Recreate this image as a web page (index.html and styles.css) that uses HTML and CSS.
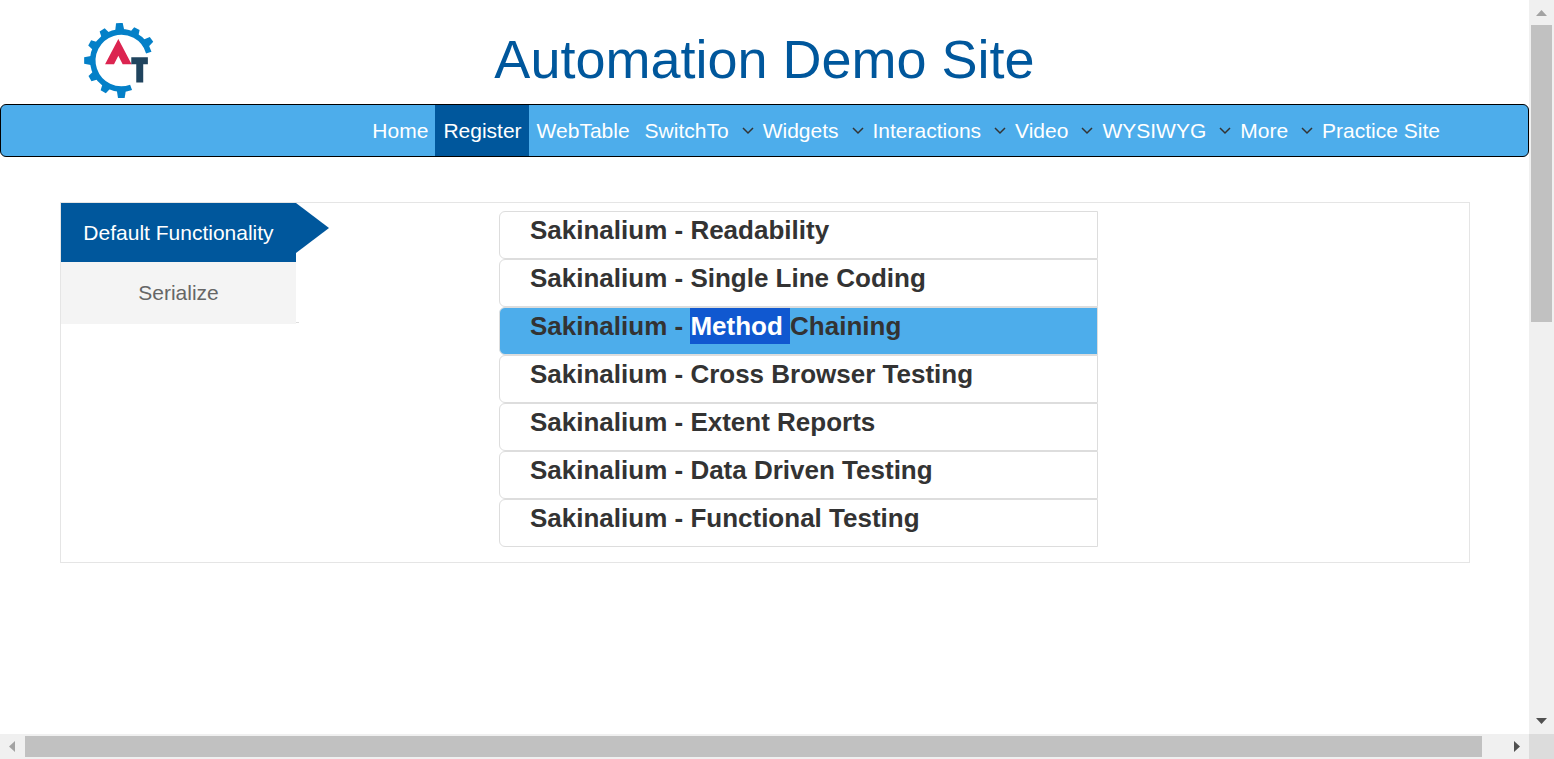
FILE: index.html
```html
<!DOCTYPE html>
<html lang="en">
<head>
<meta charset="utf-8">
<title>Automation Demo Site</title>
<link rel="stylesheet" href="styles.css">
</head>
<body class="frame">
<div class="page">
  <header class="header">
    <svg class="logo" viewBox="42 38 210 226" role="img" aria-label="Logo">
      <path d="M236.7 127.3A86 86 0 1 0 183.4 231.8" fill="none" stroke="#0480c8" stroke-width="17"/>
      <g fill="#0480c8" transform="translate(154 151)">
        <path d="M88-14L111-9V9L88 14Z" transform="rotate(-35)"/>
        <path d="M88-14L107-9V9L88 14Z" transform="rotate(-64)"/>
        <path d="M88-14L113-10V10L88 14Z" transform="rotate(-93)"/>
        <path d="M88-14L109-9V9L88 14Z" transform="rotate(-122)"/>
        <path d="M88-14L109-9V9L88 14Z" transform="rotate(-151)"/>
        <path d="M88-14L112-10V10L88 14Z" transform="rotate(180)"/>
        <path d="M88-14L109-9V9L88 14Z" transform="rotate(150)"/>
        <path d="M88-14L109-9V9L88 14Z" transform="rotate(120)"/>
        <path d="M88-14L113-10V10L88 14Z" transform="rotate(90)"/>
      </g>
      <path d="M145 86L185 162H158L145 137L132 162H105Z" fill="#dc2450"/>
      <path d="M184 141H234V162H220V217H199V162H184Z" fill="#20445e"/>
    </svg>
    <h1 class="title">Automation Demo Site</h1>
  </header>

  <nav class="navbar">
    <a class="nav-link" href="#">Home</a>
    <a class="nav-link nav-active" href="#">Register</a>
    <a class="nav-link" href="#">WebTable</a>
    <a class="nav-link" href="#">SwitchTo</a><svg class="chevron" viewBox="0 0 19 19"><path d="M7 7L12 12L17 7"/></svg>
    <a class="nav-link" href="#">Widgets</a><svg class="chevron" viewBox="0 0 19 19"><path d="M7 7L12 12L17 7"/></svg>
    <a class="nav-link" href="#">Interactions</a><svg class="chevron" viewBox="0 0 19 19"><path d="M7 7L12 12L17 7"/></svg>
    <a class="nav-link" href="#">Video</a><svg class="chevron" viewBox="0 0 19 19"><path d="M7 7L12 12L17 7"/></svg>
    <a class="nav-link" href="#">WYSIWYG</a><svg class="chevron" viewBox="0 0 19 19"><path d="M7 7L12 12L17 7"/></svg>
    <a class="nav-link" href="#">More</a><svg class="chevron" viewBox="0 0 19 19"><path d="M7 7L12 12L17 7"/></svg>
    <a class="nav-link" href="#">Practice Site</a>
  </nav>

  <main class="panel">
    <div class="tabs">
      <a class="tab tab-active" href="#">Default Functionality</a>
      <a class="tab tab-last" href="#">Serialize</a>
    </div>
    <div class="content">
      <ul class="list">
        <li class="item">Sakinalium - Readability</li>
        <li class="item">Sakinalium - Single Line Coding</li>
        <li class="item item-selected">Sakinalium - <mark class="selection">Method </mark>Chaining</li>
        <li class="item">Sakinalium - Cross Browser Testing</li>
        <li class="item">Sakinalium - Extent Reports</li>
        <li class="item">Sakinalium - Data Driven Testing</li>
        <li class="item">Sakinalium - Functional Testing</li>
      </ul>
    </div>
  </main>
</div>

<div class="bar bar-vertical">
  <svg class="arrow arrow-muted" viewBox="0 0 25 25"><path d="M7 16H18L12.500 10Z"/></svg>
  <div class="track"><div class="thumb"></div></div>
  <svg class="arrow" viewBox="0 0 25 25"><path d="M7 9H18L12.500 15Z"/></svg>
</div>
<div class="bar bar-horizontal">
  <svg class="arrow arrow-muted" viewBox="0 0 25 25"><path d="M15 7V18L9 12.500Z"/></svg>
  <div class="track"><div class="thumb"></div></div>
  <svg class="arrow" viewBox="0 0 25 25"><path d="M10 7V18L16 12.500Z"/></svg>
</div>
<div class="corner"></div>
</body>
</html>
```
FILE: styles.css
```css
* {
  box-sizing: border-box;
}

.frame {
  display: grid;
  grid-template-columns: 1fr 25px;
  grid-template-rows: 1fr 25px;
  height: 100vh;
  margin: 0;
  background: #fff;
  font-family: "Liberation Sans", Arial, sans-serif;
  font-size: 21px;
  line-height: 30px;
  color: #333;
}

.page {
  min-width: 0;
  overflow: hidden;
}

.header {
  display: grid;
  grid-template-columns: 1fr auto 1fr;
  align-items: start;
  padding: 23px 84px 6px;
}

.logo {
  width: 70px;
  height: 75px;
}

.title {
  margin: 0;
  padding-top: 6px;
  font-size: 54px;
  font-weight: 400;
  line-height: 60px;
  color: #00579c;
}

.navbar {
  display: flex;
  justify-content: flex-end;
  align-items: center;
  padding-right: 81px;
  border: 1px solid #000;
  border-radius: 6px;
  background: #4dadeb;
}

.nav-link {
  padding: 11px 7px 10px 8px;
  color: #fff;
  text-decoration: none;
  white-space: nowrap;
}

.nav-active {
  background: #00579c;
}

.chevron {
  flex: none;
  width: 19px;
  height: 19px;
  fill: none;
  stroke: #333;
  stroke-width: 1.500;
}

.panel {
  display: flex;
  align-items: flex-start;
  margin: 45px 59px 0 60px;
  border: 1px solid #e5e5e5;
}

.tabs {
  flex: none;
  width: 235px;
}

.tab {
  position: relative;
  display: block;
  padding: 16px 0;
  background: #f4f4f4;
  color: #666;
  text-align: center;
  text-decoration: none;
}

.tab-active {
  padding: 15px 0 14px;
  background: #00579c;
  color: #fff;
}

.tab-active::after {
  content: "";
  position: absolute;
  top: 0;
  left: 100%;
  width: 33px;
  height: 50px;
  background: #00579c;
  clip-path: polygon(0 0, 100% 50%, 0 100%);
}

.tab-last::after {
  content: "";
  position: absolute;
  bottom: 1px;
  left: 100%;
  width: 3px;
  height: 1px;
  background: #ddd;
}

.content {
  flex: 1;
  display: grid;
  grid-template-columns: 203fr 599fr 371fr;
  padding: 8px 0 15px;
}

.list {
  grid-column: 2;
  margin: 0;
  padding: 0;
  list-style: none;
}

.item {
  padding: 0 0 10px 30px;
  border: 1px solid #ddd;
  border-radius: 6px 0 0 6px;
  font-size: 26px;
  font-weight: 700;
  line-height: 36px;
}

.item-selected {
  background: #4dadeb;
}

.selection {
  display: inline-block;
  background: #1058d0;
  color: #fff;
  white-space: pre;
  vertical-align: top;
}

.bar {
  display: flex;
  background: #f0f0f0;
}

.bar-vertical {
  flex-direction: column;
}

.arrow {
  flex: none;
  width: 25px;
  height: 25px;
  fill: #505050;
}

.arrow-muted {
  fill: #a3a3a3;
}

.track {
  flex: 1;
}

.thumb {
  background: #c1c1c1;
}

.bar-vertical .thumb {
  height: 43.4%;
  margin: 0 2px;
}

.bar-horizontal .thumb {
  width: 98.5%;
  height: 21px;
  margin: 2px 0;
}

.corner {
  background: #dcdcdc;
}
```
